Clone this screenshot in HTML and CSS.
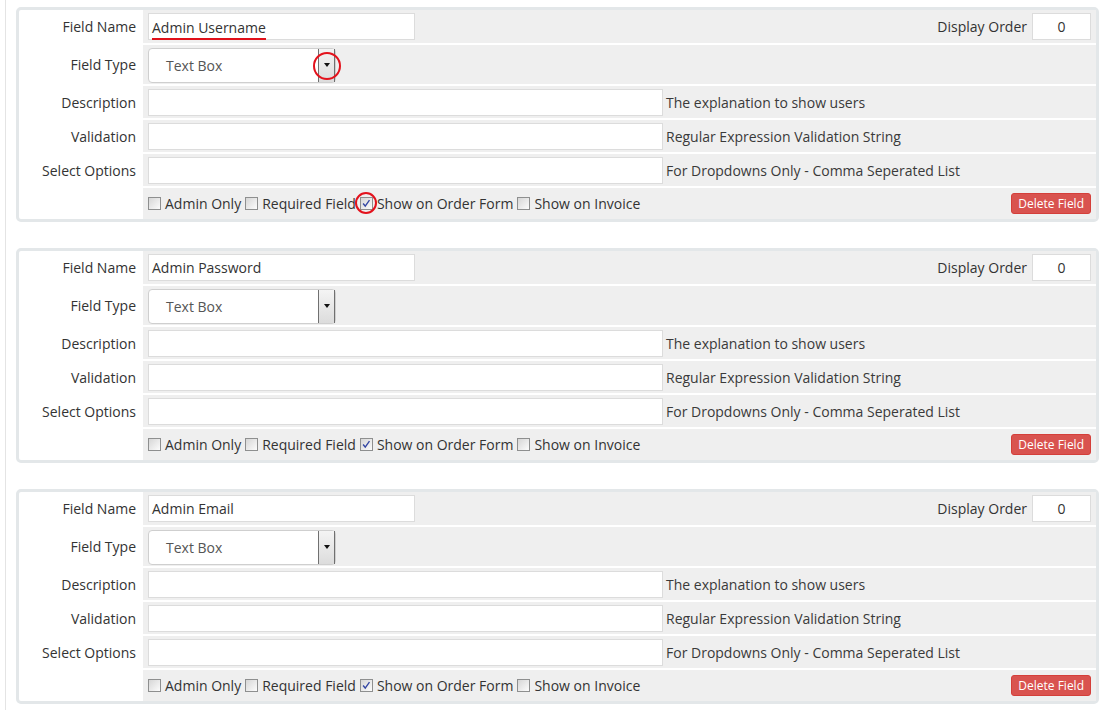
FILE: index.html
```html
<!DOCTYPE html>
<html>
<head>
<meta charset="utf-8">
<link rel="stylesheet" href="styles.css">
</head>
<body>
<div class="wrap">

  <div class="panel">
    <div class="lbl">Field Name</div>
    <div class="cell">
      <div class="input name-input"><span class="marked">Admin Username</span></div>
      <span class="spacer"></span>
      <span class="do-label">Display Order</span>
      <div class="input order-input">0</div>
    </div>
    <div class="lbl">Field Type</div>
    <div class="cell">
      <div class="select"><span class="sel-text">Text Box</span><span class="sel-btn"><span class="tri"></span></span><span class="ring ring-sel"></span></div>
    </div>
    <div class="lbl">Description</div>
    <div class="cell"><div class="input wide"></div><span class="help">The explanation to show users</span></div>
    <div class="lbl">Validation</div>
    <div class="cell"><div class="input wide"></div><span class="help">Regular Expression Validation String</span></div>
    <div class="lbl">Select Options</div>
    <div class="cell"><div class="input wide"></div><span class="help">For Dropdowns Only - Comma Seperated List</span></div>
    <div class="lbl"></div>
    <div class="cell cb-row">
      <span class="cb"></span><span class="cb-text">Admin Only</span>
      <span class="cb"></span><span class="cb-text">Required Field</span>
      <span class="cb checked"><svg viewBox="0 0 13 13" width="11" height="11"><path d="M2.5 6.5 L5 9.5 L10 2.5" fill="none" stroke="#3346a3" stroke-width="1.6"/></svg><span class="ring ring-cb"></span></span><span class="cb-text">Show on Order Form</span>
      <span class="cb"></span><span class="cb-text">Show on Invoice</span>
      <span class="spacer"></span>
      <button class="del">Delete Field</button>
    </div>
  </div>

  <div class="panel">
    <div class="lbl">Field Name</div>
    <div class="cell">
      <div class="input name-input">Admin Password</div>
      <span class="spacer"></span>
      <span class="do-label">Display Order</span>
      <div class="input order-input">0</div>
    </div>
    <div class="lbl">Field Type</div>
    <div class="cell">
      <div class="select"><span class="sel-text">Text Box</span><span class="sel-btn"><span class="tri"></span></span></div>
    </div>
    <div class="lbl">Description</div>
    <div class="cell"><div class="input wide"></div><span class="help">The explanation to show users</span></div>
    <div class="lbl">Validation</div>
    <div class="cell"><div class="input wide"></div><span class="help">Regular Expression Validation String</span></div>
    <div class="lbl">Select Options</div>
    <div class="cell"><div class="input wide"></div><span class="help">For Dropdowns Only - Comma Seperated List</span></div>
    <div class="lbl"></div>
    <div class="cell cb-row">
      <span class="cb"></span><span class="cb-text">Admin Only</span>
      <span class="cb"></span><span class="cb-text">Required Field</span>
      <span class="cb checked"><svg viewBox="0 0 13 13" width="11" height="11"><path d="M2.5 6.5 L5 9.5 L10 2.5" fill="none" stroke="#3346a3" stroke-width="1.6"/></svg></span><span class="cb-text">Show on Order Form</span>
      <span class="cb"></span><span class="cb-text">Show on Invoice</span>
      <span class="spacer"></span>
      <button class="del">Delete Field</button>
    </div>
  </div>

  <div class="panel">
    <div class="lbl">Field Name</div>
    <div class="cell">
      <div class="input name-input">Admin Email</div>
      <span class="spacer"></span>
      <span class="do-label">Display Order</span>
      <div class="input order-input">0</div>
    </div>
    <div class="lbl">Field Type</div>
    <div class="cell">
      <div class="select"><span class="sel-text">Text Box</span><span class="sel-btn"><span class="tri"></span></span></div>
    </div>
    <div class="lbl">Description</div>
    <div class="cell"><div class="input wide"></div><span class="help">The explanation to show users</span></div>
    <div class="lbl">Validation</div>
    <div class="cell"><div class="input wide"></div><span class="help">Regular Expression Validation String</span></div>
    <div class="lbl">Select Options</div>
    <div class="cell"><div class="input wide"></div><span class="help">For Dropdowns Only - Comma Seperated List</span></div>
    <div class="lbl"></div>
    <div class="cell cb-row">
      <span class="cb"></span><span class="cb-text">Admin Only</span>
      <span class="cb"></span><span class="cb-text">Required Field</span>
      <span class="cb checked"><svg viewBox="0 0 13 13" width="11" height="11"><path d="M2.5 6.5 L5 9.5 L10 2.5" fill="none" stroke="#3346a3" stroke-width="1.6"/></svg></span><span class="cb-text">Show on Order Form</span>
      <span class="cb"></span><span class="cb-text">Show on Invoice</span>
      <span class="spacer"></span>
      <button class="del">Delete Field</button>
    </div>
  </div>

</div>
</body>
</html>
```
FILE: styles.css
```css
* { box-sizing: border-box; }
html, body { margin: 0; padding: 0; background: #fff; overflow: hidden; }
body {
  font-family: "Open Sans", "Noto Sans", sans-serif;
  font-size: 14px;
  color: #333;
}
.wrap {
  margin-left: 5px;
  border-left: 1px solid #e4e4e4;
  padding: 7px 15px 0 10px;
  height: 710px;
  display: flex;
  flex-direction: column;
  gap: 26px;
}
.panel {
  border: 3px solid #e3e7e9;
  border-radius: 5px;
  display: grid;
  grid-template-columns: 122px 1fr;
  grid-template-rows: 33px 39px 32px 32px 32px 31px;
  column-gap: 2px;
  row-gap: 2px;
  background: #fff;
}
.lbl {
  display: flex;
  align-items: center;
  justify-content: flex-end;
  padding-right: 5px;
  color: #333;
  white-space: nowrap;
}
.cell {
  background: #efefef;
  display: flex;
  align-items: center;
  padding: 0 5px;
  white-space: nowrap;
}
.spacer { flex: 1; }
.input {
  background: #fff;
  border: 1px solid #dcdcdc;
  height: 27px;
  padding: 0 3px;
  display: flex;
  align-items: center;
  color: #333;
}
.name-input { width: 267px; }
.marked {
  border-bottom: 2px solid #e0101a;
  line-height: 18px;
  margin-top: 6px;
  padding-bottom: 1px;
}
.do-label { margin-right: 5px; }
.order-input { width: 59px; justify-content: center; }
.wide { width: 515px; height: 27px; }
.help { margin-left: 3px; color: #3a3a3a; }
.select {
  position: relative;
  width: 188px;
  height: 35px;
  margin-top: 1px;
  background: #fff;
  border: 1px solid #cfcfcf;
  border-radius: 4px;
  display: flex;
  align-items: center;
  padding-left: 17px;
  color: #555;
}
.sel-text { flex: 1; padding-top: 1px; }
.sel-btn {
  width: 17px;
  height: 33px;
  border-left: 1px solid #707070;
  border-right: 1px solid #707070;
  background: linear-gradient(#f4f4f4, #dcdcdc);
  display: flex;
  align-items: center;
  justify-content: center;
}
.tri {
  width: 0; height: 0;
  border-left: 3px solid transparent;
  border-right: 3px solid transparent;
  border-top: 4px solid #111;
}
.ring {
  position: absolute;
  border: 2px solid #e3121c;
  border-radius: 50%;
}
.ring-sel {
  width: 28px; height: 28px;
  right: -6px; top: 3px;
}
.cb {
  position: relative;
  width: 13px;
  height: 13px;
  border: 1px solid #8e8f8f;
  background: linear-gradient(135deg, #d6d6d6, #fcfcfc);
  margin-right: 4px;
  display: inline-flex;
  align-items: center;
  justify-content: center;
  flex: none;
}
.cb-text { margin-right: 4px; color: #333; }
.ring-cb {
  width: 22px; height: 22px;
  left: -6px; top: -6px;
}
.del {
  font-family: "Open Sans", "Noto Sans", sans-serif;
  font-size: 12px;
  color: #fff;
  background: #d9534f;
  border: 1px solid #d43f3a;
  border-radius: 3px;
  height: 21px;
  padding: 0 6px;
  line-height: 18px;
}
```
